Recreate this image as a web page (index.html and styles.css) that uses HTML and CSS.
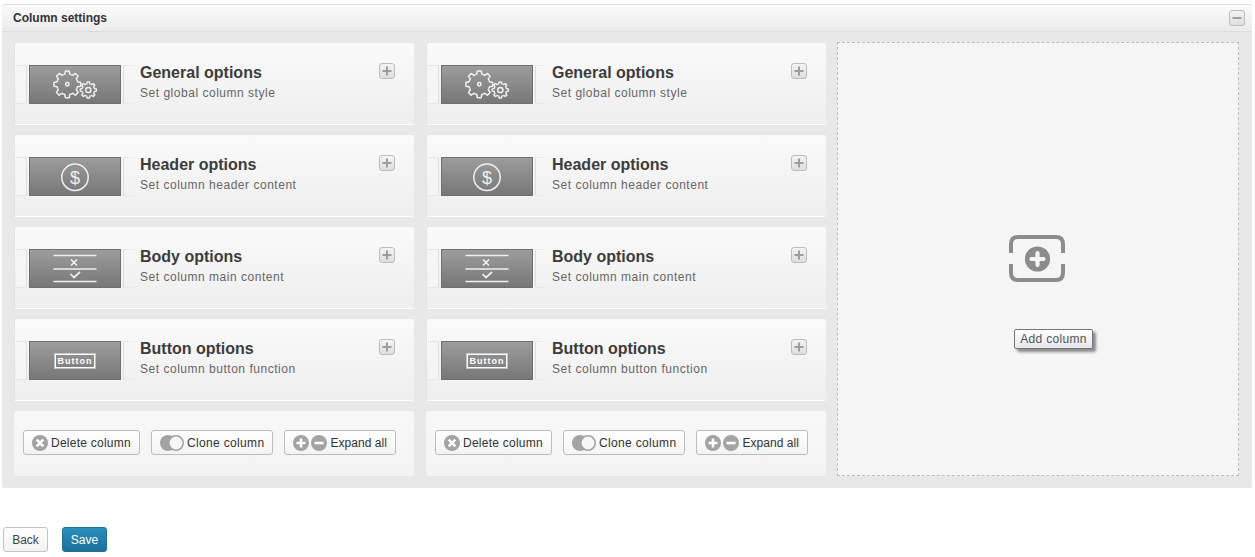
FILE: index.html
```html
<!DOCTYPE html>
<html lang="en">
<head>
<meta charset="utf-8">
<title>Column settings</title>
<link rel="stylesheet" href="styles.css">
</head>
<body>
<svg class="defs" aria-hidden="true">
  <symbol id="i-gears" viewBox="1 1 90 37">
    <defs>
      <path id="tooth" d="M-4.02-9.7-2.5-10.2-1.9-13.4H1.9L2.5-10.2 4.02-9.7"/>
      <g id="gear">
        <use href="#tooth"/>
        <use href="#tooth" transform="rotate(45)"/>
        <use href="#tooth" transform="rotate(90)"/>
        <use href="#tooth" transform="rotate(135)"/>
        <use href="#tooth" transform="rotate(180)"/>
        <use href="#tooth" transform="rotate(225)"/>
        <use href="#tooth" transform="rotate(270)"/>
        <use href="#tooth" transform="rotate(315)"/>
      </g>
    </defs>
    <g class="ln ln-gear">
      <use href="#gear" transform="translate(38.3 19.3)"/>
      <circle cx="38.3" cy="19.3" r="1.7"/>
      <use href="#gear" class="small-gear" transform="translate(59.3 25) scale(.6)"/>
      <circle cx="59.3" cy="25" r="2.6"/>
    </g>
  </symbol>
  <symbol id="i-body" viewBox="1 1 90 37">
    <path class="ln" d="M24.5 6.5H67.5M24.5 20H67.5M24.5 32.5H67.5"/>
    <path class="ln ln-thick" d="M42 10.5 48 16.5M48 10.5 42 16.5M41.5 25 45 28.5 51 23"/>
  </symbol>
  <symbol id="i-plus" viewBox="0 0 14 14">
    <path class="sym" d="M7 2.5V11.5M2.5 7H11.5"/>
  </symbol>
  <symbol id="i-minus" viewBox="0 0 14 14">
    <path class="sym" d="M2.5 7H11.5"/>
  </symbol>
  <symbol id="r-x" viewBox="0 0 16 16">
    <circle class="disc" cx="8" cy="8" r="8"/>
    <path class="cut" d="M4.7 4.7 11.3 11.3M11.3 4.7 4.7 11.3"/>
  </symbol>
  <symbol id="r-plus" viewBox="0 0 16 16">
    <circle class="disc" cx="8" cy="8" r="8"/>
    <path class="cut" d="M8 3.5V12.5M3.5 8H12.5"/>
  </symbol>
  <symbol id="r-minus" viewBox="0 0 16 16">
    <circle class="disc" cx="8" cy="8" r="8"/>
    <path class="cut" d="M3.5 8H12.5"/>
  </symbol>
  <symbol id="r-toggle" viewBox="0 0 24 16">
    <circle class="disc" cx="8" cy="8" r="8"/>
    <circle class="ring" cx="16" cy="8" r="7.2"/>
  </symbol>
</svg>

<section class="panel">
  <header class="panel-head">
    <h2 class="panel-title">Column settings</h2>
    <button class="sq-btn" type="button" aria-label="Collapse"><svg class="sq-ico"><use href="#i-minus"/></svg></button>
  </header>
  <div class="panel-body">

    <div class="column">
      <article class="card">
        <span class="stub stub-l"></span>
        <div class="thumb"><svg class="thumb-svg"><use href="#i-gears"/></svg></div>
        <span class="stub stub-r"></span>
        <div class="card-text"><h3 class="card-title">General options</h3><p class="card-sub">Set global column style</p></div>
        <button class="sq-btn sq-card" type="button" aria-label="Expand"><svg class="sq-ico"><use href="#i-plus"/></svg></button>
      </article>
      <article class="card">
        <span class="stub stub-l"></span>
        <div class="thumb"><svg class="thumb-svg" viewBox="1 1 90 37"><circle class="ln" cx="46" cy="20.3" r="13.2"/><text class="dollar" x="46" y="26.5">$</text></svg></div>
        <span class="stub stub-r"></span>
        <div class="card-text"><h3 class="card-title">Header options</h3><p class="card-sub">Set column header content</p></div>
        <button class="sq-btn sq-card" type="button" aria-label="Expand"><svg class="sq-ico"><use href="#i-plus"/></svg></button>
      </article>
      <article class="card">
        <span class="stub stub-l"></span>
        <div class="thumb"><svg class="thumb-svg"><use href="#i-body"/></svg></div>
        <span class="stub stub-r"></span>
        <div class="card-text"><h3 class="card-title">Body options</h3><p class="card-sub">Set column main content</p></div>
        <button class="sq-btn sq-card" type="button" aria-label="Expand"><svg class="sq-ico"><use href="#i-plus"/></svg></button>
      </article>
      <article class="card">
        <span class="stub stub-l"></span>
        <div class="thumb thumb-center"><span class="mini-btn">Button</span></div>
        <span class="stub stub-r"></span>
        <div class="card-text"><h3 class="card-title">Button options</h3><p class="card-sub">Set column button function</p></div>
        <button class="sq-btn sq-card" type="button" aria-label="Expand"><svg class="sq-ico"><use href="#i-plus"/></svg></button>
      </article>
      <div class="card-foot">
        <button class="btn" type="button"><svg class="ico16"><use href="#r-x"/></svg>Delete column</button>
        <button class="btn btn-clone" type="button"><svg class="ico24"><use href="#r-toggle"/></svg>Clone column</button>
        <button class="btn btn-expand" type="button"><span class="ico-pair"><svg class="ico16"><use href="#r-plus"/></svg><svg class="ico16"><use href="#r-minus"/></svg></span>Expand all</button>
      </div>
    </div>

    <div class="column">
      <article class="card">
        <span class="stub stub-l"></span>
        <div class="thumb"><svg class="thumb-svg"><use href="#i-gears"/></svg></div>
        <span class="stub stub-r"></span>
        <div class="card-text"><h3 class="card-title">General options</h3><p class="card-sub">Set global column style</p></div>
        <button class="sq-btn sq-card" type="button" aria-label="Expand"><svg class="sq-ico"><use href="#i-plus"/></svg></button>
      </article>
      <article class="card">
        <span class="stub stub-l"></span>
        <div class="thumb"><svg class="thumb-svg" viewBox="1 1 90 37"><circle class="ln" cx="46" cy="20.3" r="13.2"/><text class="dollar" x="46" y="26.5">$</text></svg></div>
        <span class="stub stub-r"></span>
        <div class="card-text"><h3 class="card-title">Header options</h3><p class="card-sub">Set column header content</p></div>
        <button class="sq-btn sq-card" type="button" aria-label="Expand"><svg class="sq-ico"><use href="#i-plus"/></svg></button>
      </article>
      <article class="card">
        <span class="stub stub-l"></span>
        <div class="thumb"><svg class="thumb-svg"><use href="#i-body"/></svg></div>
        <span class="stub stub-r"></span>
        <div class="card-text"><h3 class="card-title">Body options</h3><p class="card-sub">Set column main content</p></div>
        <button class="sq-btn sq-card" type="button" aria-label="Expand"><svg class="sq-ico"><use href="#i-plus"/></svg></button>
      </article>
      <article class="card">
        <span class="stub stub-l"></span>
        <div class="thumb thumb-center"><span class="mini-btn">Button</span></div>
        <span class="stub stub-r"></span>
        <div class="card-text"><h3 class="card-title">Button options</h3><p class="card-sub">Set column button function</p></div>
        <button class="sq-btn sq-card" type="button" aria-label="Expand"><svg class="sq-ico"><use href="#i-plus"/></svg></button>
      </article>
      <div class="card-foot">
        <button class="btn" type="button"><svg class="ico16"><use href="#r-x"/></svg>Delete column</button>
        <button class="btn btn-clone" type="button"><svg class="ico24"><use href="#r-toggle"/></svg>Clone column</button>
        <button class="btn btn-expand" type="button"><span class="ico-pair"><svg class="ico16"><use href="#r-plus"/></svg><svg class="ico16"><use href="#r-minus"/></svg></span>Expand all</button>
      </div>
    </div>

    <div class="add-col">
      <svg class="add-ico" viewBox="0 0 58 48">
        <path class="add-frame" d="M3 18V9Q3 2 10 2H48Q55 2 55 9V18M3 29V38Q3 45 10 45H48Q55 45 55 38V29"/>
        <circle class="add-disc" cx="29.5" cy="24" r="12.6"/>
        <path class="add-cross" d="M29.5 18V30M23.5 24H35.5"/>
      </svg>
      <span class="tooltip">Add column</span>
    </div>

  </div>
</section>

<div class="actions">
  <button class="act act-back" type="button">Back</button>
  <button class="act act-save" type="button">Save</button>
</div>
</body>
</html>
```

FILE: styles.css
```css
html, body { margin: 0; padding: 0; }
body {
  padding: 4px 3px 0 2px;
  background: #fff;
  font-family: "Liberation Sans", Arial, sans-serif;
  font-size: 12px;
  color: #333;
  overflow: hidden;
}
.defs { display: none; }
h2, h3, p { margin: 0; }
button { font-family: inherit; cursor: pointer; }

.panel {
  width: 1250px;
  background: #e8e8e8;
  border-radius: 3px;
}
.panel-head {
  box-sizing: border-box;
  height: 28px;
  display: flex;
  align-items: center;
  justify-content: space-between;
  padding: 0 7px 1px 11px;
  border-top: 1px solid #dedede;
  border-bottom: 1px solid #dcdcdc;
  border-radius: 3px 3px 0 0;
  background: linear-gradient(#fbfbfb, #ebebeb);
}
.panel-title { font-size: 12px; font-weight: bold; color: #333; }

.sq-btn {
  box-sizing: border-box;
  width: 16px;
  height: 16px;
  padding: 0;
  display: flex;
  border: 1px solid #bcbcbc;
  border-radius: 3px;
  background: linear-gradient(#f4f4f4, #dedede);
}
.sq-ico { width: 14px; height: 14px; }
.sym { stroke: #9d9d9d; stroke-width: 2; fill: none; }

.panel-body {
  display: flex;
  gap: 12px;
  padding: 11px 12px 12px;
}
.column {
  width: 400px;
  display: flex;
  flex-direction: column;
  gap: 10px;
}
.card {
  box-sizing: border-box;
  height: 82px;
  display: flex;
  align-items: flex-start;
  padding: 22px 19px 0 1px;
  border-left: 1px solid #e2e2e2;
  border-bottom: 1px solid #fff;
  border-radius: 2px;
  background: linear-gradient(#fafafa, #eeeeee);
}
.stub {
  box-sizing: border-box;
  height: 39px;
  flex: none;
  border-top: 1px solid #e6e6e6;
  border-bottom: 1px solid #e6e6e6;
}
.stub-l {
  width: 11px;
  border-right: 1px solid #dfdfdf;
  background: #f5f5f5;
}
.stub-r {
  width: 14px;
  margin-left: 2px;
  border-left: 1px solid #dfdfdf;
  border-top-color: transparent;
  border-bottom-color: transparent;
  background:
    linear-gradient(90deg, #e2e2e2, transparent) top / 100% 1px no-repeat,
    linear-gradient(90deg, #e2e2e2, transparent) bottom / 100% 1px no-repeat;
  background-origin: border-box;
}
.thumb {
  box-sizing: border-box;
  width: 92px;
  height: 39px;
  flex: none;
  margin-left: 2px;
  border: 1px solid #6f6f6f;
  background: linear-gradient(#9c9c9c, #777);
  display: flex;
}
.thumb-center { align-items: center; justify-content: center; }
.thumb-svg { width: 90px; height: 37px; }
.ln { fill: none; stroke: #f0f0f0; stroke-width: 1.5; }
.ln-gear { stroke-width: 1.5; stroke-linejoin: round; }
.small-gear { stroke-width: 2.4; }
.ln-thick { stroke-width: 1.7; }
.dollar {
  font-family: "Liberation Sans", Arial, sans-serif;
  font-size: 18px;
  fill: #f0f0f0;
  text-anchor: middle;
}
.mini-btn {
  box-sizing: border-box;
  width: 40px;
  height: 14px;
  border: 1px solid #fff;
  outline: .4px solid rgba(255, 255, 255, .5);
  color: #fff;
  font-size: 9px;
  font-weight: bold;
  line-height: 12px;
  text-align: center;
  letter-spacing: 1px;
  white-space: nowrap;
}
.card-text { flex: 1; margin: -2px 0 0 3px; }
.card-title { font-size: 16px; line-height: 20px; font-weight: bold; color: #3c3c3c; }
.card-sub { font-size: 12px; line-height: 14px; margin-top: 3px; color: #666; letter-spacing: .52px; }
.sq-card { flex: none; margin-top: -2px; }

.card-foot {
  box-sizing: border-box;
  height: 65px;
  display: flex;
  gap: 11px;
  padding: 19px 9px 0;
  border-radius: 2px;
  background: linear-gradient(#f8f8f8, #f3f3f3);
}
.btn {
  box-sizing: border-box;
  height: 25px;
  display: flex;
  align-items: center;
  gap: 3px;
  padding: 0 8px;
  border: 1px solid #bdbdbd;
  border-radius: 3px;
  background: linear-gradient(#fff, #f3f3f3);
  color: #333;
  font-size: 12px;
  letter-spacing: .25px;
  white-space: nowrap;
}
.btn-clone { letter-spacing: .34px; }
.btn-expand { letter-spacing: .05px; }
.ico16 { width: 16px; height: 16px; flex: none; }
.ico24 { width: 24px; height: 16px; flex: none; }
.ico-pair { display: flex; gap: 2px; }
.disc { fill: #a3a3a3; }
.cut { stroke: #fff; stroke-width: 2.6; fill: none; }
.ring { fill: #f7f7f7; stroke: #a3a3a3; stroke-width: 1.6; }

.add-col {
  box-sizing: border-box;
  position: relative;
  width: 402px;
  height: 434px;
  margin: -1px 0 0 -1px;
  display: flex;
  align-items: flex-start;
  justify-content: center;
  padding-top: 192px;
  border: 1px dashed #bdbdbd;
  background: #f5f5f5;
}
.add-ico { width: 58px; height: 48px; margin-right: 2px; }
.add-frame { fill: none; stroke: #8c8c8c; stroke-width: 4; stroke-linecap: butt; }
.add-disc { fill: #8c8c8c; }
.add-cross { stroke: #f5f5f5; stroke-width: 4.2; stroke-linecap: round; fill: none; }
.tooltip {
  position: absolute;
  left: 176px;
  top: 286px;
  box-sizing: border-box;
  width: 79px;
  height: 20px;
  border: 1px solid #767676;
  border-radius: 2px;
  background: linear-gradient(#fff, #e4e5f0);
  box-shadow: 3px 3px 3px #8a8a8a;
  color: #555;
  font-size: 12px;
  line-height: 18px;
  text-align: center;
  letter-spacing: .3px;
}

.actions {
  display: flex;
  gap: 14px;
  margin: 39px 0 0 1px;
}
.act {
  box-sizing: border-box;
  width: 45px;
  height: 25px;
  padding: 0;
  border-radius: 3px;
  font-size: 12px;
}
.act-back {
  border: 1px solid #c4c4c4;
  background: linear-gradient(#fff, #f2f2f2);
  color: #444;
}
.act-save {
  border: 1px solid #1f6f97;
  background: linear-gradient(#2b8fbb, #1c6f9b);
  color: #fff;
}
```
